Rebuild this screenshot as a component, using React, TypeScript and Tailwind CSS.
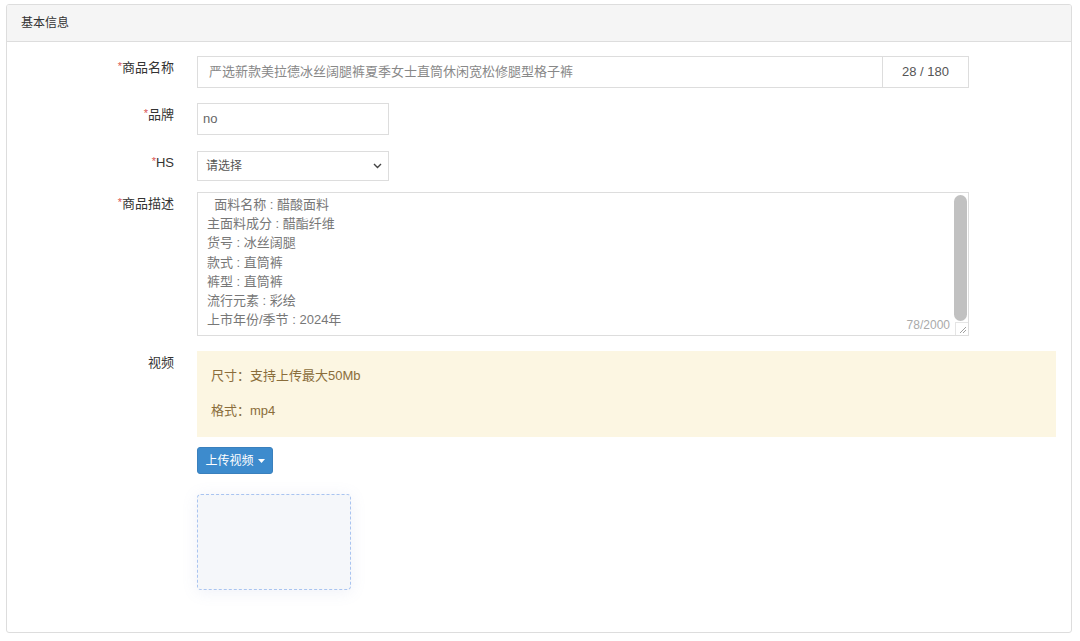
const FONT = "font-['Liberation_Sans','Noto_Sans_CJK_SC',sans-serif]";

const Label = ({ text, required = true }: { text: string; required?: boolean }) => (
    <div className="w-[168px] shrink-0 pr-[1px] pt-[2px] text-right text-[13px] text-[#333]">
        {required && <span className="text-[#d9534f] text-[11px] align-top">*</span>}
        {text}
    </div>
);

const descLines = [
    '  面料名称 : 醋酸面料',
    '主面料成分 : 醋酯纤维',
    '货号 : 冰丝阔腿',
    '款式 : 直筒裤',
    '裤型 : 直筒裤',
    '流行元素 : 彩绘',
    '上市年份/季节 : 2024年',
];

const App = () => {
    return (
        <div className={`${FONT} w-[1080px] h-[641px] bg-white pt-[4px] pl-[6px]`}>
            <div className="w-[1066px] h-[629px] border border-[#dddddd] rounded-[3px] overflow-hidden">
                <div className="h-[37px] bg-[#f5f5f5] border-b border-[#dddddd] pl-[14px] flex items-center text-[12px] text-[#333]">
                    基本信息
                </div>

                <div className="flex flex-col pt-[14px]">
                    {/* 商品名称 */}
                    <div className="flex gap-[22px]">
                        <Label text="商品名称" />
                        <div className="flex h-[32px] w-[772px] border border-[#dddddd]">
                            <div className="flex-1 flex items-center pl-[11px] text-[13px] text-[#888] whitespace-nowrap">
                                严选新款美拉德冰丝阔腿裤夏季女士直筒休闲宽松修腿型格子裤
                            </div>
                            <div className="w-[86px] border-l border-[#dddddd] flex items-center justify-center text-[13px] text-[#555]">
                                28 / 180
                            </div>
                        </div>
                    </div>

                    {/* 品牌 */}
                    <div className="flex gap-[22px] mt-[15px]">
                        <Label text="品牌" />
                        <div className="h-[32px] w-[192px] border border-[#dddddd] flex items-center pl-[5px] text-[13px] text-[#666]">
                            no
                        </div>
                    </div>

                    {/* HS */}
                    <div className="flex gap-[22px] mt-[16px]">
                        <Label text="HS" />
                        <div className="h-[30px] w-[192px] border border-[#dddddd] flex items-center justify-between pl-[8px] pr-[6px] text-[12px] text-[#555]">
                            <span>请选择</span>
                            <svg width="9" height="6" viewBox="0 0 9 6" fill="none">
                                <path d="M1 1l3.5 3.5L8 1" stroke="#444" strokeWidth="1.4" />
                            </svg>
                        </div>
                    </div>

                    {/* 商品描述 */}
                    <div className="flex gap-[22px] mt-[11px]">
                        <Label text="商品描述" />
                        <div className="relative h-[144px] w-[772px] border border-[#dddddd] pl-[9px] pt-[2px]">
                            <div className="flex flex-col text-[13px] leading-[19.2px] text-[#777]">
                                {descLines.map((line) => (
                                    <span key={line} className="whitespace-pre">{line}</span>
                                ))}
                            </div>
                            <div className="absolute right-[1px] top-[2px] w-[13px] h-[126px] rounded-full bg-[#c1c1c1]" />
                            <div className="absolute right-[0px] bottom-[0px] w-[13px] h-[13px] border-l border-t border-[#e5e5e5] bg-white">
                                <svg width="12" height="12" viewBox="0 0 12 12">
                                    <path d="M10 4L4 10M10 7L7 10" stroke="#888" strokeWidth="0.8" />
                                </svg>
                            </div>
                            <div className="absolute right-[18px] bottom-[1px] text-[12px] text-[#aaa]">78/2000</div>
                        </div>
                    </div>

                    {/* 视频 */}
                    <div className="flex gap-[22px] mt-[15px]">
                        <Label text="视频" required={false} />
                        <div className="flex flex-col w-[859px]">
                            <div className="h-[86px] bg-[#fcf6e2] pl-[14px] pt-[15px] text-[13px] text-[#8a6d3b] flex flex-col gap-[15px]">
                                <span>尺寸：支持上传最大50Mb</span>
                                <span>格式：mp4</span>
                            </div>
                            <div className="mt-[10px]">
                                <button className="h-[27px] w-[76px] rounded-[3px] bg-[#3d8bcd] border border-[#3a80bd] text-white text-[12px] flex items-center justify-center gap-[4px]">
                                    上传视频
                                    <svg width="7" height="4" viewBox="0 0 7 4">
                                        <path d="M0 0h7L3.5 4z" fill="#fff" />
                                    </svg>
                                </button>
                            </div>
                            <div className="mt-[20px] w-[154px] h-[96px] rounded-[4px] border border-dashed border-[#a9c4f0] bg-[#f5f7fa] shadow-[0_2px_16px_rgba(120,140,200,0.12)]" />
                        </div>
                    </div>
                </div>
            </div>
        </div>
    );
};

export default App;
